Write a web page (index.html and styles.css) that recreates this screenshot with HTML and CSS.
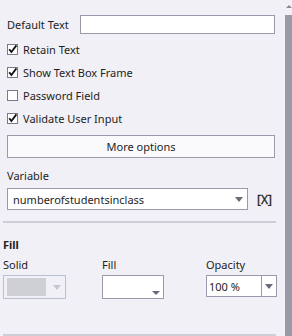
FILE: index.html
```html
<!DOCTYPE html>
<html>
<head>
    <link rel="stylesheet" href="styles.css">
</head>
<body>
    <div class="panel">
        <div class="content">
            <div class="row field-row">
                <span class="field-label">Default Text</span>
                <div class="textbox"></div>
            </div>

            <div class="checks">
                <div class="check-row">
                    <svg class="box" width="11" height="11" viewBox="0 0 11 11"><rect x="0.5" y="0.5" width="10" height="10" fill="#fff" stroke="#7a7a88"/><path d="M2.2 5.2 L4.4 8 L9.4 1.4" fill="none" stroke="#111" stroke-width="1.8"/></svg>
                    <span>Retain Text</span>
                </div>
                <div class="check-row">
                    <svg class="box" width="11" height="11" viewBox="0 0 11 11"><rect x="0.5" y="0.5" width="10" height="10" fill="#fff" stroke="#7a7a88"/><path d="M2.2 5.2 L4.4 8 L9.4 1.4" fill="none" stroke="#111" stroke-width="1.8"/></svg>
                    <span>Show Text Box Frame</span>
                </div>
                <div class="check-row">
                    <svg class="box" width="11" height="11" viewBox="0 0 11 11"><rect x="0.5" y="0.5" width="10" height="10" fill="#fff" stroke="#7a7a88"/></svg>
                    <span>Password Field</span>
                </div>
                <div class="check-row">
                    <svg class="box" width="11" height="11" viewBox="0 0 11 11"><rect x="0.5" y="0.5" width="10" height="10" fill="#fff" stroke="#7a7a88"/><path d="M2.2 5.2 L4.4 8 L9.4 1.4" fill="none" stroke="#111" stroke-width="1.8"/></svg>
                    <span>Validate User Input</span>
                </div>
            </div>

            <div class="more-btn">More options</div>

            <div class="var-label">Variable</div>
            <div class="row var-row">
                <div class="select">
                    <span>numberofstudentsinclass</span>
                    <span class="arrow"></span>
                </div>
                <span class="clear-x">[X]</span>
            </div>

            <div class="sep"></div>

            <div class="fill-title">Fill</div>
            <div class="fill-grid">
                <div class="col col-solid">
                    <span class="small-label">Solid</span>
                    <div class="solid-drop">
                        <div class="swatch"></div>
                        <span class="arrow light"></span>
                    </div>
                </div>
                <div class="col col-fill">
                    <span class="small-label">Fill</span>
                    <div class="fill-drop">
                        <span class="arrow small"></span>
                    </div>
                </div>
                <div class="col col-opacity">
                    <span class="small-label">Opacity</span>
                    <div class="opacity-drop">
                        <span class="op-value">100 %</span>
                        <span class="op-btn"><span class="arrow"></span></span>
                    </div>
                </div>
            </div>

            <div class="sep bottom"></div>
        </div>
        <div class="scrollbar">
            <span class="scroll-up"></span>
            <div class="thumb"></div>
        </div>
    </div>
</body>
</html>
```

FILE: styles.css
```css
html, body {
    margin: 0;
    padding: 0;
    background: #f0f0f6;
}

body {
    font-family: "Noto Sans", "Open Sans", sans-serif;
    font-size: 11px;
    color: #1e1e24;
    width: 292px;
    height: 336px;
    overflow: hidden;
}

.panel {
    display: flex;
    height: 336px;
}

.content {
    width: 277px;
    padding-left: 3px;
    margin-right: 5px;
}

.row {
    display: flex;
    align-items: center;
}

.field-row {
    margin-top: 15px;
    height: 19px;
    padding-left: 4px;
}

.field-label {
    width: 73px;
}

.textbox {
    width: 193px;
    height: 17px;
    background: #fff;
    border: 1px solid #9a9aaa;
}

.checks {
    margin-top: 4px;
    padding-left: 4px;
}

.check-row {
    display: flex;
    align-items: center;
    height: 23px;
    gap: 5px;
}

.more-btn {
    margin: 5px 0 0 4px;
    width: 266px;
    height: 21px;
    border: 1px solid #9a9aaa;
    background: #fafafd;
    display: flex;
    align-items: center;
    justify-content: center;
}

.var-label {
    margin: 10px 0 0 4px;
    height: 16px;
    line-height: 16px;
}

.var-row {
    margin: 4px 0 0 4px;
    height: 22px;
}

.select {
    height: 20px;
    border: 1px solid #9a9aaa;
    background: #fff;
    display: flex;
    align-items: center;
    justify-content: space-between;
    padding-left: 5px;
    width: 234px;
}

.arrow {
    width: 0;
    height: 0;
    border-left: 4px solid transparent;
    border-right: 4px solid transparent;
    border-top: 5px solid #6a6a78;
    margin-right: 4px;
}

.arrow.light {
    border-top-color: #c4c6d0;
}

.arrow.small {
    border-top-width: 4px;
    margin-right: 3px;
    margin-bottom: 3px;
}

.clear-x {
    margin-left: 9px;
    font-size: 12px;
    color: #222;
    -webkit-text-stroke: 0.3px #222;
}

.sep {
    margin-top: 11px;
    height: 2px;
    background: #cdcdd6;
    width: 273px;
}

.fill-title {
    margin-top: 15px;
    font-weight: bold;
    height: 14px;
    line-height: 14px;
}

.fill-grid {
    display: flex;
    margin-top: 6px;
}

.col {
    display: flex;
    flex-direction: column;
}

.small-label {
    height: 14px;
    line-height: 14px;
    margin-bottom: 3px;
}

.col-solid {
    width: 99px;
}

.col-fill {
    width: 104px;
}

.solid-drop {
    width: 61px;
    height: 22px;
    border: 1px solid #b8c0d4;
    display: flex;
    align-items: center;
    justify-content: space-between;
}

.swatch {
    width: 39px;
    height: 18px;
    background: #cfcfd6;
    margin-left: 3px;
}

.fill-drop {
    width: 60px;
    height: 22px;
    border: 1px solid #9a9aaa;
    background: #fff;
    display: flex;
    align-items: flex-end;
    justify-content: flex-end;
}

.opacity-drop {
    width: 69px;
    height: 20px;
    border: 1px solid #9a9aaa;
    background: #fff;
    display: flex;
}

.op-value {
    flex: 1;
    display: flex;
    align-items: center;
    padding-left: 2px;
}

.op-btn {
    width: 14px;
    border-left: 1px solid #9a9aaa;
    display: flex;
    align-items: center;
    justify-content: center;
}

.op-btn .arrow {
    margin-right: 0;
}

.sep.bottom {
    margin-top: 35px;
}

.scrollbar {
    width: 7px;
    display: flex;
    flex-direction: column;
    align-items: center;
}

.scroll-up {
    margin-top: 5px;
    width: 0;
    height: 0;
    border-left: 3px solid transparent;
    border-right: 3px solid transparent;
    border-bottom: 3px solid #8a8a98;
}

.thumb {
    margin-top: 7px;
    width: 7px;
    flex: 1;
    background: #9a9aa6;
}
```
